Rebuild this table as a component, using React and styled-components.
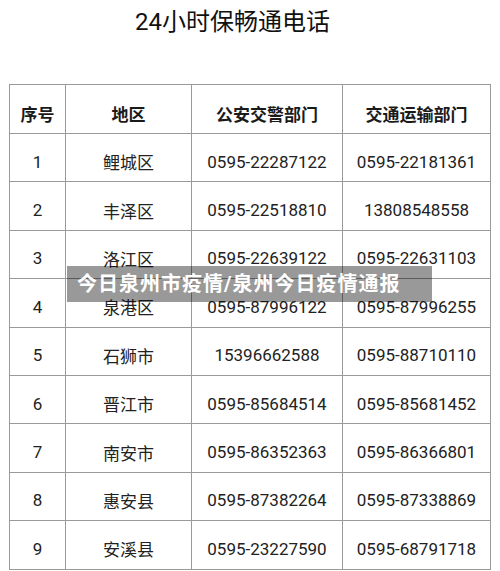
import React from 'react';
import styled, { createGlobalStyle } from 'styled-components';

const GlobalStyle = createGlobalStyle`
  html, body {
    margin: 0;
    padding: 0;
    background: #fff;
  }
  body {
    font-family: Roboto, "Noto Sans CJK SC", sans-serif;
    color: #222;
  }
`;

const Page = styled.div`
  position: relative;
  width: 500px;
  height: 571px;
  overflow: hidden;
  background: #fff;
`;

const Title = styled.h1`
  margin: 0;
  padding: 10px 0 0 135px;
  font-size: 24px;
  line-height: 24px;
  font-weight: 400;
  color: #111;
`;

const Table = styled.table`
  margin: 50px 0 0 9px;
  width: 481px;
  border-collapse: collapse;
  table-layout: fixed;
`;

const HeadCell = styled.th`
  border: 1px solid #9a9a9a;
  height: 49px;
  padding: 8px 0 0;
  font-size: 17px;
  font-weight: 700;
  text-align: center;
  color: #1a1a1a;
  box-sizing: border-box;
`;

const Cell = styled.td`
  border: 1px solid #9a9a9a;
  height: 48.4px;
  padding: 8px 0 0;
  font-size: 17px;
  text-align: center;
  color: #222;
  box-sizing: border-box;
`;

const Banner = styled.div`
  position: absolute;
  left: 67px;
  top: 266px;
  width: 365px;
  height: 36px;
  padding-left: 10px;
  box-sizing: border-box;
  background: rgba(0, 0, 0, 0.4);
  color: #fff;
  font-size: 20px;
  font-weight: 700;
  line-height: 36px;
  letter-spacing: 1px;
  white-space: nowrap;
`;

const rows = [
  ['1', '鲤城区', '0595-22287122', '0595-22181361'],
  ['2', '丰泽区', '0595-22518810', '13808548558'],
  ['3', '洛江区', '0595-22639122', '0595-22631103'],
  ['4', '泉港区', '0595-87996122', '0595-87996255'],
  ['5', '石狮市', '15396662588', '0595-88710110'],
  ['6', '晋江市', '0595-85684514', '0595-85681452'],
  ['7', '南安市', '0595-86352363', '0595-86366801'],
  ['8', '惠安县', '0595-87382264', '0595-87338869'],
  ['9', '安溪县', '0595-23227590', '0595-68791718'],
];

const App = () => {
  return (
    <>
      <GlobalStyle />
      <Page>
        <Title>24小时保畅通电话</Title>
        <Table>
          <colgroup>
            <col style={{ width: 56 }} />
            <col style={{ width: 126 }} />
            <col style={{ width: 151 }} />
            <col style={{ width: 148 }} />
          </colgroup>
          <thead>
            <tr>
              <HeadCell>序号</HeadCell>
              <HeadCell>地区</HeadCell>
              <HeadCell>公安交警部门</HeadCell>
              <HeadCell>交通运输部门</HeadCell>
            </tr>
          </thead>
          <tbody>
            {rows.map((row) => (
              <tr key={row[0]}>
                {row.map((value, i) => (
                  <Cell key={i}>{value}</Cell>
                ))}
              </tr>
            ))}
          </tbody>
        </Table>
        <Banner>今日泉州市疫情/泉州今日疫情通报</Banner>
      </Page>
    </>
  );
};

export default App;
